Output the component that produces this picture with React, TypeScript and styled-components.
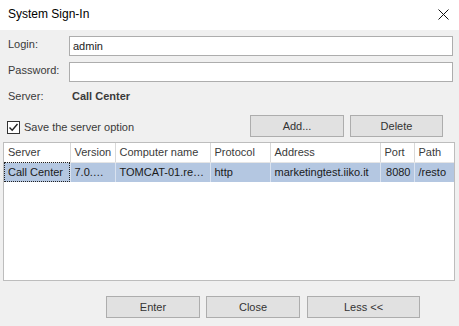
import React, { useState } from "react";
import styled, { createGlobalStyle } from "styled-components";

const GlobalStyle = createGlobalStyle`
  html, body {
    margin: 0;
    padding: 0;
    background: #f0f0f0;
  }
  * {
    box-sizing: border-box;
  }
`;

const Window = styled.div`
  width: 459px;
  height: 326px;
  background: #f0f0f0;
  display: flex;
  flex-direction: column;
  font-family: "Liberation Sans", Arial, sans-serif;
  font-size: 11px;
  color: #333;
  overflow: hidden;
`;

const TitleBar = styled.div`
  height: 30px;
  background: #fff;
  display: flex;
  align-items: center;
  justify-content: space-between;
  padding: 0 10px 0 8px;
`;

const Title = styled.span`
  font-size: 12px;
  color: #000;
  margin-top: -2px;
`;

const CloseIcon = styled.svg`
  width: 11px;
  height: 11px;
  margin-top: -2px;
`;

const Fields = styled.div`
  display: grid;
  grid-template-columns: 61px 1fr;
  row-gap: 6px;
  padding: 6px 6px 0 8px;
  align-items: center;
`;

const Label = styled.label`
  color: #3a3a3a;
  margin-top: -1px;
  align-self: start;
  padding-top: 3px;
`;

const Input = styled.input`
  height: 20px;
  width: 100%;
  border: 1px solid #adadad;
  background: #fff;
  font-family: inherit;
  font-size: 11px;
  color: #222;
  padding: 0 3px;
  outline: none;
`;

const ServerName = styled.span`
  font-weight: bold;
  color: #3a3a3a;
  padding-left: 3px;
  margin-top: 2px;
`;

const ServerLabel = styled(Label)`
  margin-top: 2px;
  padding-top: 0;
`;

const OptionsRow = styled.div`
  display: flex;
  align-items: center;
  margin-top: 13px;
  padding: 0 16px 0 7px;
  height: 22px;
`;

const CheckLabel = styled.label`
  display: flex;
  align-items: center;
  gap: 4px;
  color: #3a3a3a;
  flex: 1;
  margin-top: 2px;
`;

const Box = styled.span`
  width: 13px;
  height: 13px;
  border: 1px solid #333;
  background: #fff;
  display: flex;
  align-items: center;
  justify-content: center;
`;

const Button = styled.button<{ $w: number }>`
  width: ${(p) => p.$w}px;
  height: 22px;
  background: #e1e1e1;
  border: 1px solid #adadad;
  font-family: inherit;
  font-size: 11px;
  color: #333;
  padding: 0;
`;

const ButtonGroup = styled.div`
  display: flex;
  gap: 6px;
`;

const TableWrap = styled.div`
  margin: 5px 4px 0 3px;
  height: 139px;
  background: #fff;
  border: 1px solid #bdbdbd;
  overflow: hidden;
`;

const Table = styled.table`
  border-collapse: collapse;
  table-layout: fixed;
  width: 100%;
`;

const Th = styled.th<{ $w?: number }>`
  width: ${(p) => (p.$w ? `${p.$w}px` : "auto")};
  height: 19px;
  font-weight: normal;
  text-align: left;
  padding: 0 0 0 4px;
  color: #3a3a3a;
  border-right: 1px solid #d9d9d9;
  border-bottom: 1px solid #e5e5e5;
  white-space: nowrap;
  overflow: hidden;
  &:last-child {
    border-right: none;
  }
`;

const Td = styled.td<{ $right?: boolean; $focus?: boolean }>`
  height: 20px;
  background: #b4c7e1;
  color: #1a1a1a;
  padding: 0 ${(p) => (p.$right ? "3px" : "0")} 0 4px;
  text-align: ${(p) => (p.$right ? "right" : "left")};
  border-right: 1px solid #d9e2ef;
  white-space: nowrap;
  overflow: hidden;
  outline: ${(p) => (p.$focus ? "1px dotted #222" : "none")};
  outline-offset: -1px;
  &:last-child {
    border-right: none;
  }
`;

const Footer = styled.div`
  display: flex;
  gap: 6px;
  padding-left: 106px;
  margin-top: 15px;
`;

const LessButton = styled(Button)`
  margin-left: 1px;
`;

const columns = [
  { name: "Server", w: 66 },
  { name: "Version", w: 45 },
  { name: "Computer name", w: 95 },
  { name: "Protocol", w: 60 },
  { name: "Address", w: 110 },
  { name: "Port", w: 34 },
  { name: "Path" },
];

// shown as the list truncates them
const row = [
  "Call Center",
  "7.0.…",
  "TOMCAT-01.re…",
  "http",
  "marketingtest.iiko.it",
  "8080",
  "/resto",
];

const App = () => {
  const [login, setLogin] = useState<string>("admin");
  const [password, setPassword] = useState<string>("");

  return (
    <React.Fragment>
      <GlobalStyle />
      <Window>
        <TitleBar>
          <Title>System Sign-In</Title>
          <CloseIcon viewBox="0 0 11 11">
            <path d="M0.5 0.5 L10.5 10.5 M10.5 0.5 L0.5 10.5" stroke="#111" strokeWidth="1" />
          </CloseIcon>
        </TitleBar>
        <Fields>
          <Label>Login:</Label>
          <Input value={login} onChange={(e) => setLogin(e.target.value)} />
          <Label>Password:</Label>
          <Input type="password" value={password} onChange={(e) => setPassword(e.target.value)} />
          <ServerLabel>Server:</ServerLabel>
          <ServerName>Call Center</ServerName>
        </Fields>
        <OptionsRow>
          <CheckLabel>
            <Box>
              <svg width="11" height="11" viewBox="0 0 11 11">
                <path d="M1.5 5.5 L4.2 8.3 L9.5 2" fill="none" stroke="#222" strokeWidth="1.4" />
              </svg>
            </Box>
            Save the server option
          </CheckLabel>
          <ButtonGroup>
            <Button $w={94}>Add...</Button>
            <Button $w={93}>Delete</Button>
          </ButtonGroup>
        </OptionsRow>
        <TableWrap>
          <Table>
            <thead>
              <tr>
                {columns.map((c) => (
                  <Th key={c.name} $w={c.w}>
                    {c.name}
                  </Th>
                ))}
              </tr>
            </thead>
            <tbody>
              <tr>
                {row.map((v, i) => (
                  <Td key={i} $right={i === 5} $focus={i === 0}>
                    {v}
                  </Td>
                ))}
              </tr>
            </tbody>
          </Table>
        </TableWrap>
        <Footer>
          <Button $w={94}>Enter</Button>
          <Button $w={94}>Close</Button>
          <LessButton $w={113}>Less &lt;&lt;</LessButton>
        </Footer>
      </Window>
    </React.Fragment>
  );
};

export default App;
